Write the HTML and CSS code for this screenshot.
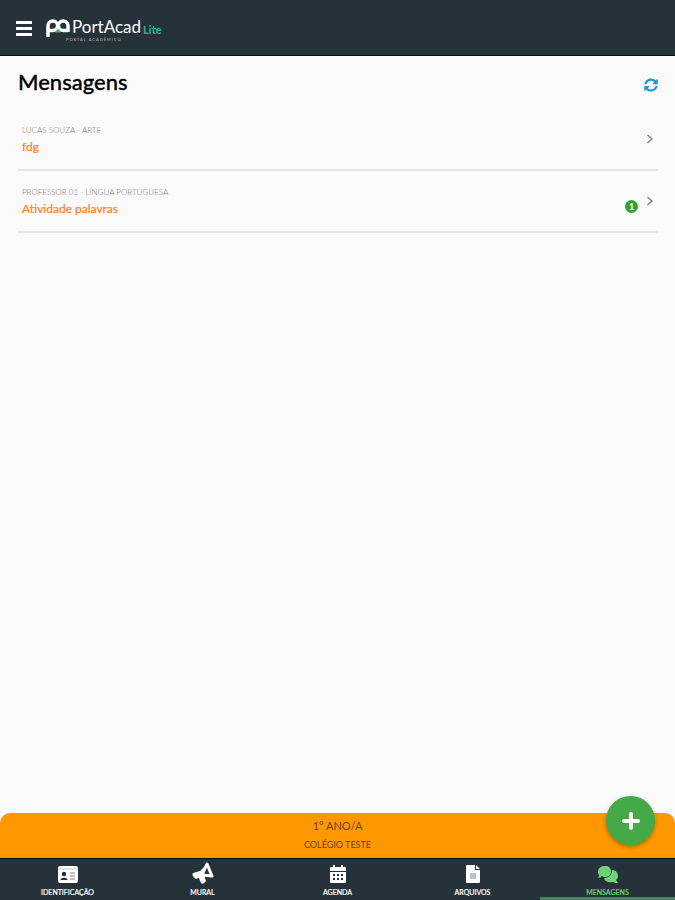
FILE: index.html
```html
<!DOCTYPE html>
<html lang="pt-BR">
<head>
    <meta charset="UTF-8" />
    <meta name="viewport" content="width=device-width, initial-scale=1" />
    <title>Mensagens - PortAcad Lite</title>
    <link rel="stylesheet" href="styles.css">
</head>
<body>
<header class="topo">
    <button type="button" class="menu-btn" aria-label="Menu">
        <svg width="16" height="16" viewBox="0 0 16 16" fill="#fff">
            <rect y="1" width="16" height="3" rx="0.5" />
            <rect y="7" width="16" height="3" rx="0.5" />
            <rect y="13" width="16" height="3" rx="0.5" />
        </svg>
    </button>
    <a href="#" class="logo">
        <svg class="logo-marca" width="24" height="18" viewBox="0 0 24 18" fill="none">
            <path d="M2 18V6.500a4.800 4.800 0 1 1 4.800 5H2M22 13V6.500a4.800 4.800 0 1 0-4.800 5H22" stroke="#fff" stroke-width="3.500" />
            <path d="M9 13.500l3-4 3 4z" fill="#2fbf4f" />
        </svg>
        <span class="logo-texto">
            <span class="logo-nome">PortAcad</span>
            <span class="logo-sub">PORTAL ACADÊMICO</span>
        </span>
        <span class="logo-lite">Lite</span>
    </a>
</header>

<main class="conteudo">
    <div class="titulo">
        <h1>Mensagens</h1>
        <button type="button" class="atualizar" aria-label="Atualizar">
            <svg width="14" height="14" viewBox="0 0 512 512" fill="#2492dc">
                <path d="M371 144c-31-30-72-47-115-47-78 0-145 53-163 127-1 5-6 9-12 9H24c-7 0-13-7-12-14C33 103 135 16 256 16c66 0 127 26 171 69l36-36c15-15 41-4 41 17v134c0 13-11 24-24 24H346c-21 0-32-26-17-41zM32 288h134c21 0 32 26 17 41l-42 42c31 29 72 45 115 45 78 0 145-53 163-127 1-5 6-9 12-9h57c7 0 13 7 12 14-21 115-123 202-244 202-66 0-127-26-171-69l-36 36c-15 15-41 4-41-17V312c0-13 11-24 24-24z" />
            </svg>
        </button>
    </div>

    <!-- Lista de mensagens -->
    <ul class="lista">
        <li>
            <a href="#" class="mensagem">
                <span class="texto">
                    <span class="remetente">LUCAS SOUZA - ARTE</span>
                    <span class="assunto">fdg</span>
                </span>
                <svg class="seta" width="8" height="10" viewBox="0 0 8 10" fill="none" stroke="#888" stroke-width="1.5">
                    <path d="M1.5 1L6 5L1.5 9" />
                </svg>
            </a>
        </li>
        <li>
            <a href="#" class="mensagem">
                <span class="texto">
                    <span class="remetente">PROFESSOR 01 - LÍNGUA PORTUGUESA</span>
                    <span class="assunto">Atividade palavras</span>
                </span>
                <span class="contador">1</span>
                <svg class="seta" width="8" height="10" viewBox="0 0 8 10" fill="none" stroke="#888" stroke-width="1.5">
                    <path d="M1.5 1L6 5L1.5 9" />
                </svg>
            </a>
        </li>
    </ul>
</main>

<footer class="rodape">
    <div class="turma">
        <div class="turma-nome">1° ANO/A</div>
        <div class="turma-escola">COLÉGIO TESTE</div>
        <button type="button" class="nova" aria-label="Nova mensagem">
            <svg width="18" height="18" viewBox="0 0 18 18" stroke="#fff" stroke-width="4" stroke-linecap="round">
                <path d="M9 2v14M2 9h14" />
            </svg>
        </button>
    </div>

    <nav class="abas">
        <a href="#" class="aba">
            <svg width="22" height="20" viewBox="0 0 22 20">
                <rect x="1" y="2" width="20" height="17" rx="2" fill="#fff" />
                <path d="M1 5h20" stroke="#c3c8ca" />
                <circle cx="7" cy="10" r="2.2" fill="#26323a" />
                <path d="M3.5 16c0-3 7-3 7 0z" fill="#26323a" />
                <path d="M13 9h5M13 12h5M13 15h5" stroke="#7a8489" />
            </svg>
            IDENTIFICAÇÃO
        </a>
        <a href="#" class="aba">
            <svg width="22" height="22" viewBox="0 0 22 22">
                <path d="M15 2L20 14L10 13Z" fill="none" stroke="#fff" stroke-width="3" stroke-linejoin="round" />
                <path d="M14 3L11 14L4 17Q-1 14 1 11L8 9Z" fill="#fff" />
                <path d="M6 14l6-1 2 6q-3 4-5 2z" fill="#fff" />
            </svg>
            MURAL
        </a>
        <a href="#" class="aba">
            <svg width="18" height="20" viewBox="0 0 18 20">
                <path d="M4 1h2v3H4zM12 1h2v3h-2zM2 3h14q1 0 1 1v3H1V4q0-1 1-1zM1 8h16v10q0 1-1 1H2q-1 0-1-1z" fill="#fff" />
                <path d="M4 10h2v2H4zM8 10h2v2H8zM12 10h2v2h-2zM4 14h2v2H4zM8 14h2v2H8zM12 14h2v2h-2z" fill="#26323a" />
            </svg>
            AGENDA
        </a>
        <a href="#" class="aba">
            <svg width="16" height="20" viewBox="0 0 16 20">
                <path d="M2 1h8v5h5v12q0 1-1 1H2q-1 0-1-1V2q0-1 1-1zM11 1l4 4h-4z" fill="#fff" />
                <path d="M5 10h6M5 12h6M5 14h6" stroke="#7a8489" />
            </svg>
            ARQUIVOS
        </a>
        <a href="#" class="aba ativa">
            <svg width="22" height="20" viewBox="0 0 22 20">
                <path d="M15 6c4 0 6 3 6 6 0 2-1 3-2 4l2 3c-2 0-3 0-5-1-4 1-8 0-9-4 5 0 8-3 8-8z" fill="#6fd07a" />
                <path d="M8 2c4 0 6 2 6 5.500S12 13 8 13c-1 0-2 0-3-1-1 1-3 2-4 2 1-1 1-2 1-3C1 10 1 9 1 7.500 1 4 4 2 8 2z" fill="#6fd07a" />
            </svg>
            MENSAGENS
        </a>
    </nav>
</footer>
</body>
</html>
```

FILE: styles.css
```css
* {
    box-sizing: border-box;
}
body {
    margin: 0;
    min-height: 100vh;
    display: flex;
    flex-direction: column;
    font-family: Lato, "Open Sans", sans-serif;
    background: #fafafa;
    color: #000;
}
a {
    text-decoration: none;
    color: inherit;
}
button {
    padding: 0;
    border: none;
    background: none;
    cursor: pointer;
}
svg {
    display: block;
}

/* Topo */
.topo {
    display: flex;
    align-items: center;
    gap: 14px;
    height: 56px;
    padding: 0 16px;
    background: #26323a;
    border-bottom: 1px solid #080d10;
}
.logo {
    display: flex;
    align-items: center;
    gap: 2px;
    color: #fff;
}
.logo-texto {
    display: flex;
    flex-direction: column;
    padding-top: 4px;
}
.logo-nome {
    font-size: 17px;
    line-height: 20px;
}
.logo-sub {
    margin-left: -6px;
    font-size: 4px;
    line-height: 5px;
    letter-spacing: 1px;
    white-space: nowrap;
    color: #b5bbbe;
}
.logo-lite {
    font-size: 11px;
    font-weight: 900;
    line-height: 12px;
    padding-top: 4px;
    color: #1fb587;
}

/* Conteudo */
.conteudo {
    flex: 1;
    padding: 12px 17px 24px 18px;
}
.titulo {
    display: flex;
    justify-content: space-between;
    align-items: center;
    height: 34px;
    margin-bottom: 7px;
}
h1 {
    margin: 0;
    padding-bottom: 6px;
    font-size: 22px;
    font-weight: 500;
    line-height: 28px;
    -webkit-text-stroke: 0.3px #000;
}
.lista {
    margin: 0;
    padding: 0;
    list-style: none;
}
.mensagem {
    display: flex;
    align-items: center;
    gap: 8px;
    height: 62px;
    padding: 0 4px;
    border-bottom: 2px solid #e6e6e6;
}
.texto {
    flex: 1;
}
.remetente,
.assunto {
    display: block;
}
.remetente {
    font-size: 8px;
    font-weight: 300;
    line-height: 14px;
    color: #777;
}
.assunto {
    font-size: 12px;
    line-height: 19px;
    color: #ff7f1a;
    -webkit-text-stroke: 0.2px #ff7f1a;
}
.contador {
    width: 13px;
    height: 13px;
    margin-top: 10px;
    border-radius: 50%;
    background: #2fa336;
    color: #fff;
    font-size: 9px;
    font-weight: bold;
    line-height: 13px;
    text-align: center;
}

/* Rodape */
.turma {
    position: relative;
    padding: 4px 0;
    text-align: center;
    background: #ff9800;
    border-radius: 10px 10px 0 0;
    color: #6b3f2c;
}
.turma-nome {
    font-size: 11px;
    line-height: 18px;
}
.turma-escola {
    font-size: 9px;
    line-height: 19px;
}
.nova {
    position: absolute;
    top: -17px;
    right: 20px;
    display: flex;
    justify-content: center;
    align-items: center;
    width: 49px;
    height: 49px;
    border-radius: 50%;
    background: #45a948;
    box-shadow: 0 2px 4px rgba(0, 0, 0, 0.3);
}
.abas {
    display: flex;
    height: 42px;
    background: #26323a;
    border-top: 1px solid #080d10;
}
.aba {
    flex: 1;
    display: flex;
    flex-direction: column;
    justify-content: flex-end;
    align-items: center;
    gap: 3px;
    border-bottom: 3px solid transparent;
    color: #fff;
    font-size: 7px;
    line-height: 10px;
    -webkit-text-stroke: 0.2px;
}
.aba.ativa {
    color: #6fd07a;
    border-bottom-color: #4f7f63;
}
```
